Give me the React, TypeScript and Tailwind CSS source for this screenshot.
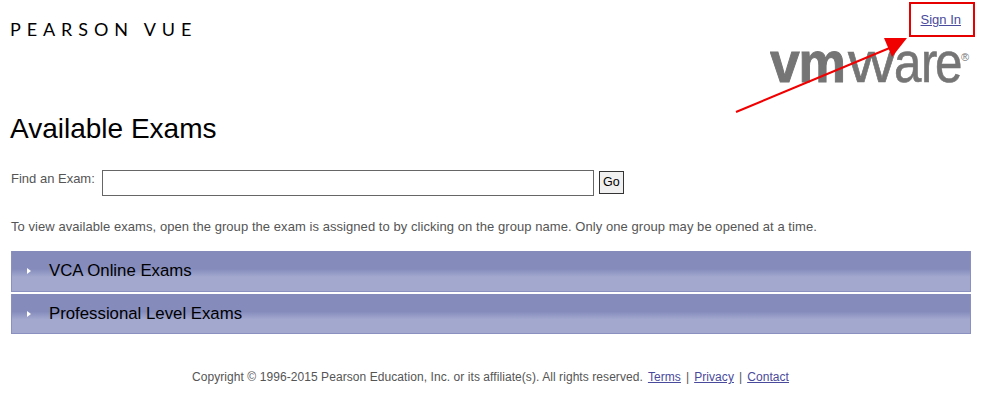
export default function App() {
  const font = "font-['Liberation_Sans',Arial,sans-serif]";
  const logoLetter = { fontFamily: "Liberation Sans", fontSize: 58, fill: "#757575", stroke: "#757575", strokeWidth: 0.6 };
  return (
    <div className={`relative w-[984px] h-[410px] overflow-hidden bg-white ${font}`}>
      <header className="flex justify-between h-[113px] pl-[10px] pr-[13px]">
        <div className="pt-[18px] font-['Lato',sans-serif] text-[18px] leading-[22px] tracking-[5.9px] text-black whitespace-nowrap">PEARSON VUE</div>
        <div className="flex flex-col items-end">
          <a href="#" className="mt-[12px] mr-[10px] text-[13px] leading-[15px] text-[#4a4a9c] underline">Sign In</a>
          <svg width="202" height="70" viewBox="0 -20 202 70" className="-mt-[2px] -mr-[1px]" aria-label="vmware logo">
            <g transform="scale(0.92,1)">
              <text y="37" x="0 31" {...logoLetter} fontWeight="700" strokeWidth="1">vm</text>
            </g>
            <text transform="translate(78,37) scale(1.12,1)" {...logoLetter}>w</text>
            <text transform="translate(124,37) scale(0.85,1)" {...logoLetter}>a</text>
            <text transform="translate(151,37) scale(0.85,1)" {...logoLetter}>r</text>
            <text transform="translate(165,37) scale(0.85,1)" {...logoLetter}>e</text>
            <text x="191" y="16" fontFamily="Liberation Sans" fontSize="11" fill="#757575">®</text>
          </svg>
        </div>
      </header>
      <main className="pl-[10px]">
        <h1 className="text-[28px] leading-[32px] text-black">Available Exams</h1>
        <form className="flex items-start mt-[25px] pl-[1px]">
          <label className="text-[13px] leading-[15px] text-[#555] mt-[1px]">Find an Exam:</label>
          <input className="ml-[7px] w-[492px] h-[26px] border border-[#666] bg-white" />
          <button type="button" className="ml-[5px] mt-[1px] w-[25px] h-[23px] border border-[#333] bg-[#f0f0f0] text-[12.5px] text-black">Go</button>
        </form>
        <p className="mt-[23px] pl-[1px] text-[13px] leading-[16px] tracking-[0.06px] text-[#555] whitespace-nowrap">To view available exams, open the group the exam is assigned to by clicking on the group name. Only one group may be opened at a time.</p>
        <div className="mt-[16px] ml-[1px] w-[960px] flex flex-col gap-[2px]">
          {["VCA Online Exams", "Professional Level Exams"].map((t, i) => (
            <div key={t} className={`flex items-center ${i === 0 ? "h-[41px]" : "h-[40px]"} pl-[15px] border-x border-b border-[#8a90c0] bg-[linear-gradient(#858cbc_0%,#858cbc_45%,#a2a8ce_65%,#a2a8ce_100%)]`}>
              <span className="w-0 h-0 border-y-[3px] border-y-transparent border-l-[4px] border-l-white" />
              <span className="ml-[18px] text-[16.8px] text-black">{t}</span>
            </div>
          ))}
        </div>
      </main>
      <footer className="mt-[36px] flex justify-center gap-[5px] pr-[3px] text-[12px] leading-[15px] tracking-[0.07px] text-[#555] whitespace-nowrap">
        <span>Copyright © 1996-2015 Pearson Education, Inc. or its affiliate(s). All rights reserved.</span>
        <a href="#" className="underline text-[#4a4a9c]">Terms</a><span>|</span>
        <a href="#" className="underline text-[#4a4a9c]">Privacy</a><span>|</span>
        <a href="#" className="underline text-[#4a4a9c]">Contact</a>
      </footer>
      <div className="absolute left-[909px] top-[2px] w-[66px] h-[35px] border-2 border-[#e60000]" />
      <svg className="absolute left-0 top-0 pointer-events-none" width="984" height="410">
        <line x1="736" y1="112" x2="892" y2="47" stroke="#f00000" strokeWidth="2" />
        <polygon points="884,38 907,38 892,57" fill="#f00000" />
      </svg>
    </div>
  );
}
